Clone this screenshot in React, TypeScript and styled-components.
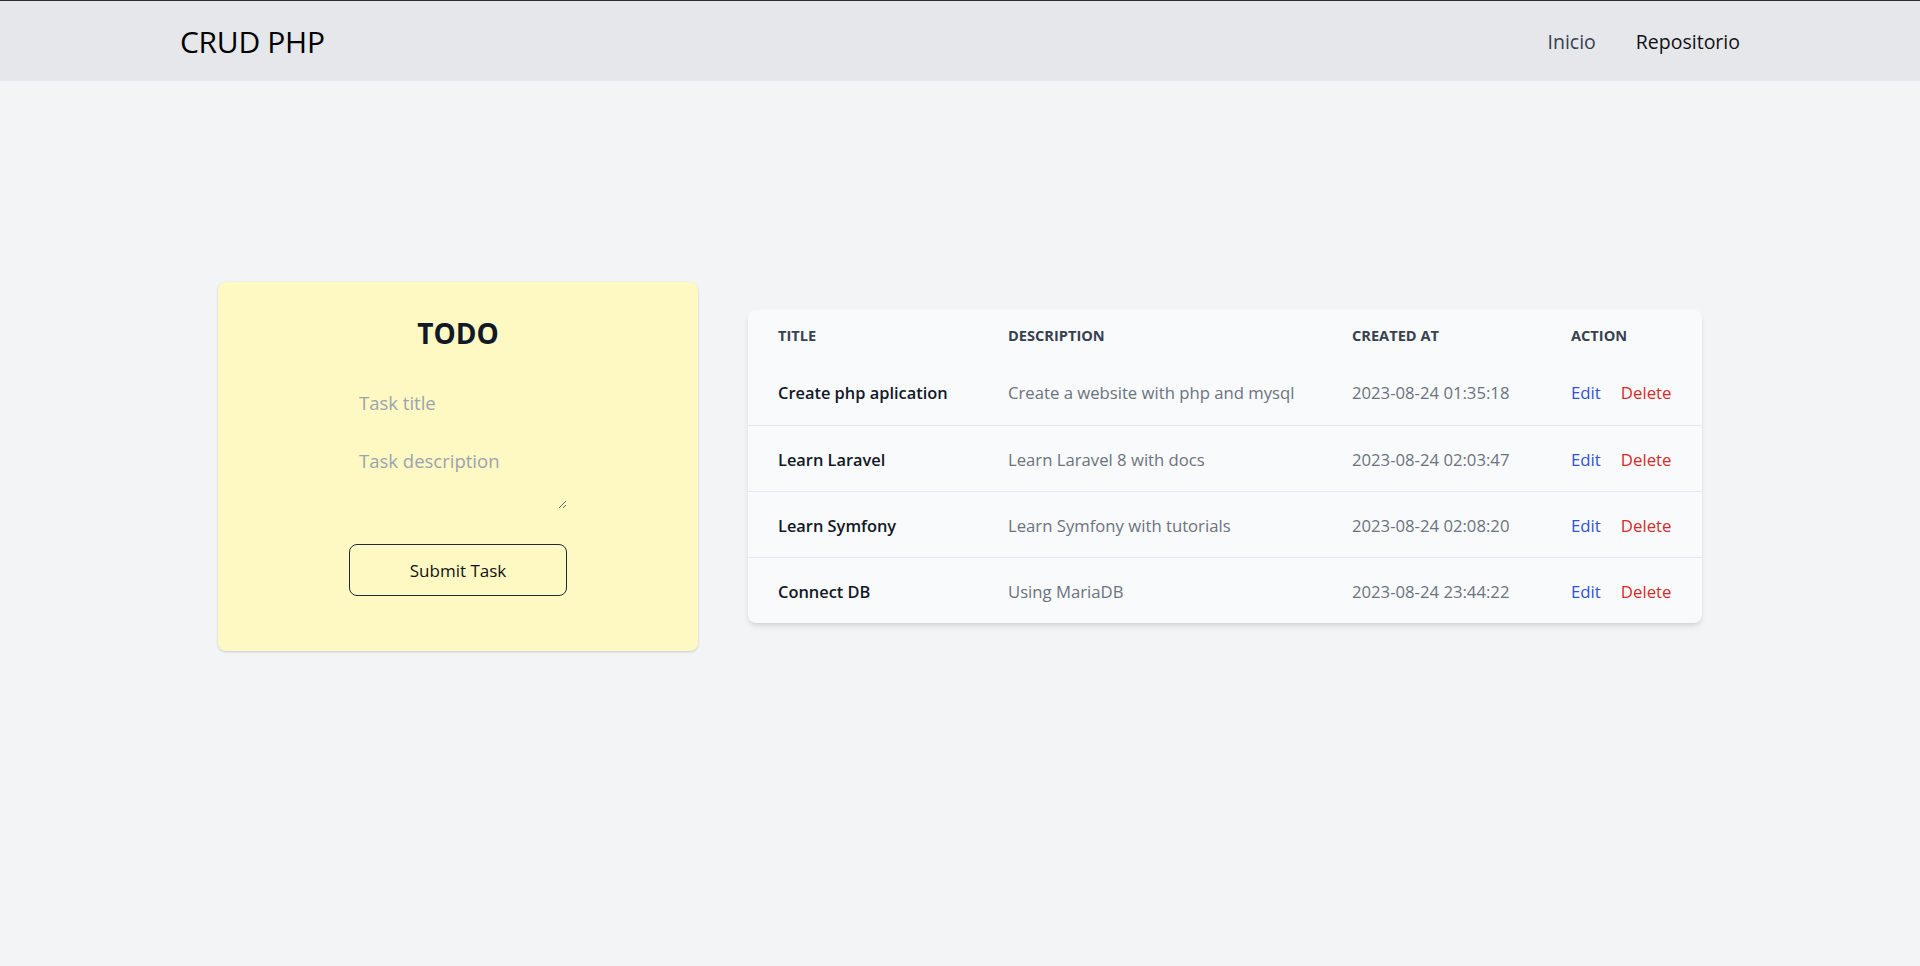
import React from "react";
import styled, { createGlobalStyle } from "styled-components";

const GlobalStyle = createGlobalStyle`
  * { box-sizing: border-box; }
  html, body { margin: 0; padding: 0; }
  body {
    background: #f3f4f6;
    font-family: "Open Sans", "Noto Sans", Arial, sans-serif;
    color: #111827;
  }
`;

const Page = styled.div`
  min-height: 966px;
  background: #f3f4f6;
`;

const Header = styled.header`
  height: 81px;
  background: #e5e7eb;
  border-top: 1px solid #2b2b36;
  display: flex;
  align-items: center;
  justify-content: space-between;
  padding: 0 180px 0 180px;
`;

const Brand = styled.div`
  font-size: 30px;
  color: #000;
  font-weight: 400;
  letter-spacing: -0.3px;
`;

const Nav = styled.nav`
  display: flex;
  align-items: center;
  gap: 40px;
`;

const NavLink = styled.a<{ $strong?: boolean }>`
  font-size: 19.5px;
  text-decoration: none;
  color: ${(p) => (p.$strong ? "#111111" : "#374151")};
  cursor: pointer;
`;

const Main = styled.main`
  display: flex;
  justify-content: center;
  align-items: center;
  gap: 50px;
  padding-top: 201px;
`;

const Card = styled.form`
  width: 480px;
  height: 369px;
  background: #fef9c3;
  border-radius: 8px;
  box-shadow: 0 1px 3px rgba(0, 0, 0, 0.12), 0 1px 2px rgba(0, 0, 0, 0.06);
  display: flex;
  flex-direction: column;
  align-items: center;
  padding-top: 31px;
`;

const CardTitle = styled.h1`
  margin: 0;
  font-size: 28px;
  line-height: 40px;
  font-weight: 700;
  color: #111827;
`;

const Field = styled.input`
  width: 218px;
  height: 44px;
  margin-top: 27px;
  padding: 0 10px;
  border: none;
  outline: none;
  background: transparent;
  font-family: inherit;
  font-size: 18.5px;
  color: #111827;
  &::placeholder { color: #9ca3af; }
`;

const Area = styled.textarea`
  width: 218px;
  height: 71px;
  margin-top: 14px;
  padding: 9px 10px;
  border: none;
  outline: none;
  background: transparent;
  font-family: inherit;
  font-size: 18.5px;
  line-height: 28px;
  color: #111827;
  &::placeholder { color: #9ca3af; }
`;

const SubmitButton = styled.button`
  width: 218px;
  height: 52px;
  margin-top: 35px;
  border: 1px solid #1f2937;
  border-radius: 8px;
  background: transparent;
  font-family: inherit;
  font-size: 17px;
  font-weight: 500;
  color: #111;
  cursor: pointer;
`;

const TableCard = styled.div`
  width: 954px;
  background: #f9fafb;
  border-radius: 8px;
  box-shadow: 0 4px 6px -1px rgba(0, 0, 0, 0.1), 0 2px 4px -2px rgba(0, 0, 0, 0.1);
  overflow: hidden;
`;

const Table = styled.table`
  width: 100%;
  border-collapse: collapse;
  table-layout: fixed;
`;

const HeadCell = styled.th`
  height: 49px;
  padding: 0 0 0 30px;
  text-align: left;
  font-size: 14.6px;
  font-weight: 700;
  text-transform: uppercase;
  color: #374151;
`;

const Row = styled.tr`
  height: 66px;
  & + & { border-top: 1px solid #e5e7eb; }
`;

const Cell = styled.td<{ $tone?: "title" | "muted" }>`
  padding: 2px 0 0 30px;
  white-space: nowrap;
  font-size: ${(p) => (p.$tone === "title" ? "16.4px" : "16.7px")};
  font-weight: ${(p) => (p.$tone === "title" ? 600 : 400)};
  color: ${(p) => (p.$tone === "title" ? "#111827" : "#6b7280")};
`;

const Action = styled.a<{ $kind: "edit" | "delete" }>`
  font-size: 16.8px;
  font-weight: 500;
  text-decoration: none;
  cursor: pointer;
  color: ${(p) => (p.$kind === "edit" ? "#2d52d6" : "#d42a2a")};
  & + & { margin-left: 20px; }
`;

const tasks = [
  { title: "Create php aplication", description: "Create a website with php and mysql", created: "2023-08-24 01:35:18" },
  { title: "Learn Laravel", description: "Learn Laravel 8 with docs", created: "2023-08-24 02:03:47" },
  { title: "Learn Symfony", description: "Learn Symfony with tutorials", created: "2023-08-24 02:08:20" },
  { title: "Connect DB", description: "Using MariaDB", created: "2023-08-24 23:44:22" },
];

export default function App() {
  return (
    <Page>
      <GlobalStyle />
      <Header>
        <Brand>CRUD PHP</Brand>
        <Nav>
          <NavLink>Inicio</NavLink>
          <NavLink $strong>Repositorio</NavLink>
        </Nav>
      </Header>
      <Main>
        <Card onSubmit={(e) => e.preventDefault()}>
          <CardTitle>TODO</CardTitle>
          <Field placeholder="Task title" />
          <Area placeholder="Task description" />
          <SubmitButton type="submit">Submit Task</SubmitButton>
        </Card>
        <TableCard>
          <Table>
            <colgroup>
              <col style={{ width: 230 }} />
              <col style={{ width: 344 }} />
              <col style={{ width: 219 }} />
              <col style={{ width: 161 }} />
            </colgroup>
            <thead>
              <tr>
                <HeadCell>Title</HeadCell>
                <HeadCell>Description</HeadCell>
                <HeadCell>Created at</HeadCell>
                <HeadCell>Action</HeadCell>
              </tr>
            </thead>
            <tbody>
              {tasks.map((t) => (
                <Row key={t.created}>
                  <Cell $tone="title">{t.title}</Cell>
                  <Cell $tone="muted">{t.description}</Cell>
                  <Cell $tone="muted">{t.created}</Cell>
                  <Cell>
                    <Action $kind="edit">Edit</Action>
                    <Action $kind="delete">Delete</Action>
                  </Cell>
                </Row>
              ))}
            </tbody>
          </Table>
        </TableCard>
      </Main>
    </Page>
  );
}
